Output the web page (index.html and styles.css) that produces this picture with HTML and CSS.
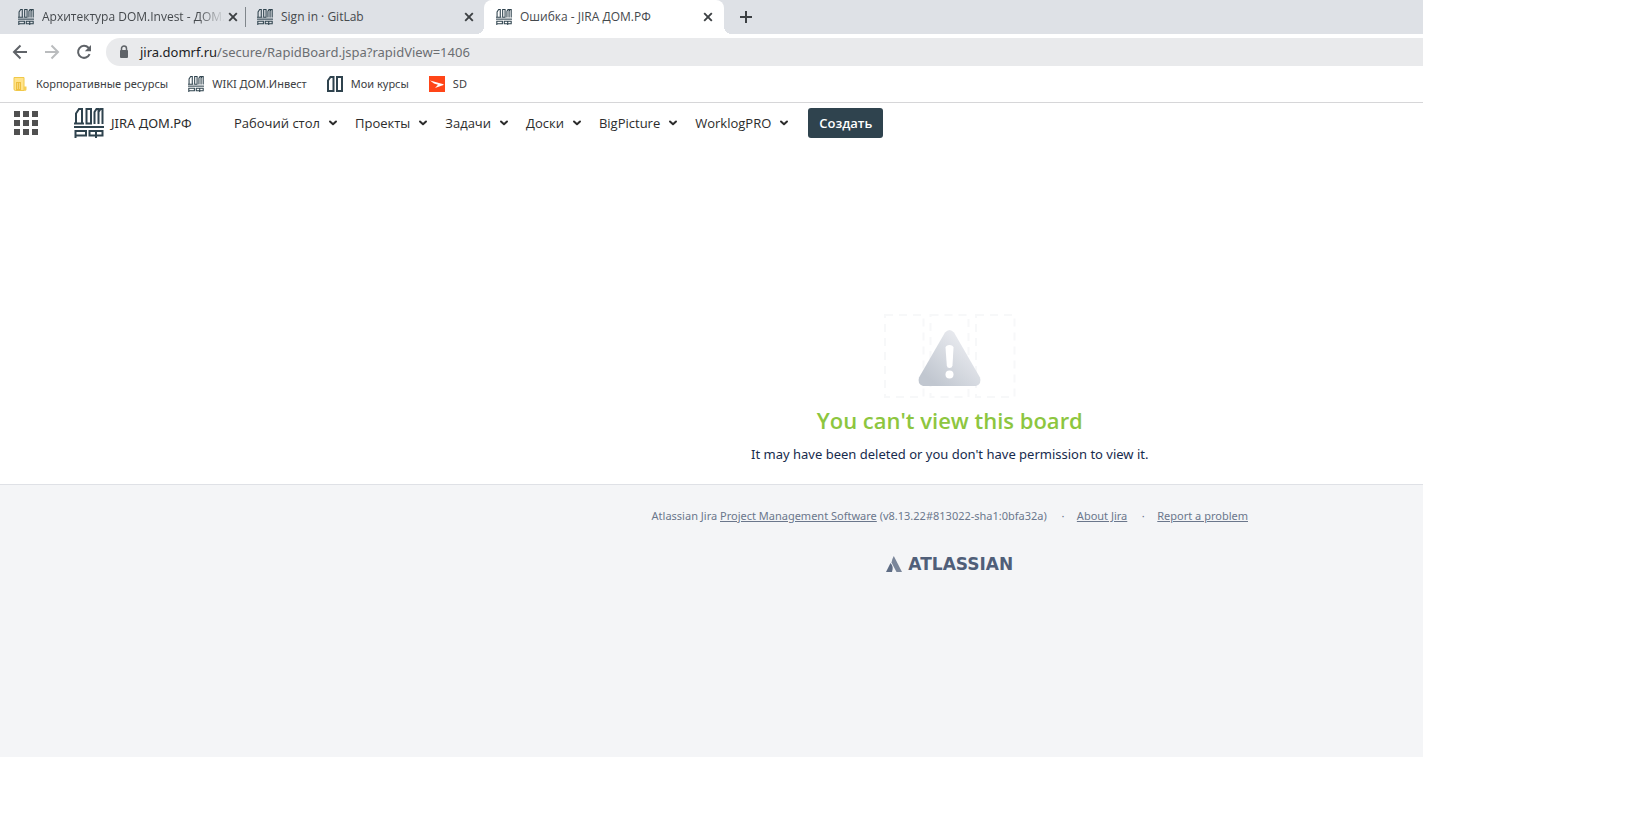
FILE: index.html
```html
<!DOCTYPE html>
<html lang="ru">
<head>
<meta charset="utf-8">
<title>Ошибка - JIRA ДОМ.РФ</title>
<link rel="stylesheet" href="styles.css">
</head>
<body>
<svg class="defs" aria-hidden="true">
  <symbol id="domrf" viewBox="0 0 30 30">
    <g fill="none" stroke="currentColor" stroke-width="2">
      <path d="M2 16V5.500L5 1H8V16M0 15.500H10M12.500 1H17V15.500H12.500ZM20.500 16V4L22.500 1H24.500V16M24.500 4L26.500 1H28.500V16"/>
      <path d="M0 19H30" stroke-width="2"/>
      <path d="M1.500 30V23H12V27.500H1.500M15.500 23H28.500V27.500H15.500ZM22 22V30"/>
    </g>
  </symbol>
  <symbol id="cross" viewBox="0 0 10 10"><path d="M1.200 1.200L8.800 8.800M8.800 1.200L1.200 8.800" stroke="currentColor" stroke-width="1.900"/></symbol>
  <symbol id="chevron" viewBox="0 0 10 8"><path d="M2 2.500L5 5.300L8 2.500" fill="none" stroke="currentColor" stroke-width="2" stroke-linecap="round" stroke-linejoin="round"/></symbol>
</svg>
<div class="screen">
  <div class="tabs">
    <div class="tab">
      <svg class="favicon"><use href="#domrf"/></svg>
      <span class="tab-title tab-fade">Архитектура DOM.Invest - ДОМ.</span>
      <button class="close" aria-label="Закрыть"><svg><use href="#cross"/></svg></button>
    </div>
    <div class="tab tab-split">
      <svg class="favicon"><use href="#domrf"/></svg>
      <span class="tab-title">Sign in · GitLab</span>
      <button class="close" aria-label="Закрыть"><svg><use href="#cross"/></svg></button>
    </div>
    <div class="tab tab-active">
      <svg class="favicon"><use href="#domrf"/></svg>
      <span class="tab-title">Ошибка - JIRA ДОМ.РФ</span>
      <button class="close" aria-label="Закрыть"><svg><use href="#cross"/></svg></button>
    </div>
    <button class="new-tab" aria-label="Новая вкладка"><svg viewBox="0 0 12 12"><path d="M6 0V12M0 6H12" stroke="currentColor" stroke-width="2"/></svg></button>
  </div>
  <div class="toolbar">
    <button class="tool" aria-label="Назад"><svg viewBox="0 0 16 16"><path d="M15 8H2M8.500 1.500L2 8L8.500 14.500" fill="none" stroke="currentColor" stroke-width="2"/></svg></button>
    <button class="tool tool-off" aria-label="Вперёд"><svg viewBox="0 0 16 16"><path d="M1 8H14M7.500 1.500L14 8L7.500 14.500" fill="none" stroke="currentColor" stroke-width="2"/></svg></button>
    <button class="tool" aria-label="Обновить"><svg viewBox="0 0 16 16"><path d="M13.600 10.200A6 6 0 1 1 12.500 3.800L14 5.400" fill="none" stroke="currentColor" stroke-width="2"/><path d="M15 1V7.200H8.800Z" fill="currentColor"/></svg></button>
    <a class="address" href="#">
      <svg class="lock" viewBox="0 0 10 14"><path d="M2.500 6V3.500a2.500 2.500 0 0 1 5 0V6" fill="none" stroke="currentColor" stroke-width="1.500"/><rect x="1" y="5" width="8" height="8" rx="1" fill="currentColor"/></svg>
      <span><span class="host">jira.domrf.ru</span>/secure/RapidBoard.jspa?rapidView=1406</span>
    </a>
  </div>
  <div class="bookmarks">
    <a href="#"><svg viewBox="0 0 16 16"><path d="M2 1.500h10v13H3.500A1.500 1.500 0 0 1 2 13Z" fill="#ffe38a" stroke="#f0c849"/><path d="M12 10.500h2.500v3a1.500 1.500 0 0 1-2.500 1Z" fill="#f7cf55"/><path d="M4 6h5v8H4Z" fill="#eebf3f"/><path d="M5 8h1M7 8h1M5 10h1M7 10h1M5 12h1M7 12h1" stroke="#fff0b8"/></svg><span>Корпоративные ресурсы</span></a>
    <a href="#"><svg><use href="#domrf"/></svg><span>WIKI ДОМ.Инвест</span></a>
    <a href="#"><svg viewBox="0 0 16 16"><path d="M1 15V4.500L3.500 1H6.500V15ZM10 1H15V15H10Z" fill="none" stroke="#2f434e" stroke-width="2"/></svg><span>Мои курсы</span></a>
    <a href="#"><svg viewBox="0 0 16 16"><rect width="16" height="16" fill="#ff4518"/><path d="M1 4.500L14.500 8.200V9L6 12L9 8.700L5 7.500Z" fill="#fff"/></svg><span>SD</span></a>
  </div>
  <header class="header">
    <button class="apps" aria-label="Приложения"><svg viewBox="0 0 24 24"><path d="M0 0h6v6H0zM9 0h6v6H9zM18 0h6v6h-6zM0 9h6v6H0zM9 9h6v6H9zM18 9h6v6h-6zM0 18h6v6H0zM9 18h6v6H9zM18 18h6v6h-6z" fill="#505050"/></svg></button>
    <a class="brand" href="#"><svg><use href="#domrf"/></svg><span>JIRA ДОМ.РФ</span></a>
    <nav class="nav">
      <button>Рабочий стол<svg><use href="#chevron"/></svg></button>
      <button>Проекты<svg><use href="#chevron"/></svg></button>
      <button>Задачи<svg><use href="#chevron"/></svg></button>
      <button>Доски<svg><use href="#chevron"/></svg></button>
      <button>BigPicture<svg><use href="#chevron"/></svg></button>
      <button>WorklogPRO<svg><use href="#chevron"/></svg></button>
    </nav>
    <button class="create">Создать</button>
  </header>
  <main class="message">
    <svg class="art" viewBox="0 0 132 84">
      <defs><linearGradient id="grey" x1="0.200" y1="0.900" x2="0.800" y2="0.300"><stop offset="0" stop-color="#c1c7d0"/><stop offset="1" stop-color="#e6e8ed"/></linearGradient></defs>
      <path d="M1 1H39.500V83H1ZM46.500 1H84.500V83H46.500ZM92 1H130.500V83H92Z" fill="none" stroke="#f7f8f9" stroke-width="2" stroke-dasharray="8 6"/>
      <path d="M61 18.500Q65.500 13.500 70 18.500L96 63.500Q98 70 92 72H39Q33 70 35 63.500Z" fill="url(#grey)"/>
      <path d="M61.500 33.500Q62 31 65.500 31T69.500 33.500L68.500 51.500Q68 54 65.500 54T62.800 51.500Z" fill="#fff"/><circle cx="65.500" cy="60.500" r="4" fill="#fff"/>
    </svg>
    <h1>You can't view this board</h1>
    <p>It may have been deleted or you don't have permission to view it.</p>
  </main>
  <footer class="footer">
    <ul>
      <li>Atlassian Jira <a href="#">Project Management Software</a> (v8.13.22#813022-sha1:0bfa32a)</li>
      <li><span class="dot">·</span><a href="#">About Jira</a></li>
      <li><span class="dot">·</span><a href="#">Report a problem</a></li>
    </ul>
    <a class="atlassian" href="#"><svg viewBox="0 0 16 16"><path d="M7.800 0L16 16H10.500L5.500 6.500Q6 3 7.800 0Z" fill="#7a869a"/><path d="M4.500 7Q8 10.500 6 16H0Z" fill="#5e6c84"/></svg><span>ATLASSIAN</span></a>
  </footer>
</div>
</body>
</html>
```
FILE: styles.css
```css
* { box-sizing: border-box; }
body {
  margin: 0;
  padding: 0 229px 60px 0;
  background: #fff;
  color: #172b4d;
  font: 13px/20px "Noto Sans", sans-serif;
}
a { color: inherit; text-decoration: none; }
button { border: 0; padding: 0; background: none; color: inherit; font: inherit; }
svg { display: block; flex: none; }
.defs { position: absolute; width: 0; height: 0; }
.screen { display: flex; flex-direction: column; min-height: calc(100vh - 60px); }

.tabs { display: flex; height: 34px; padding-left: 6px; background: #dee1e6; color: #45494d; font-family: "Open Sans", "Noto Sans", sans-serif; font-size: 12px; }
.tab { display: flex; align-items: center; width: 239px; padding: 0 7px 0 12px; }
.tab-split { background: linear-gradient(#80868b, #80868b) left center / 1px 20px no-repeat; }
.tab-active { width: 240px; padding-right: 8px; background: #fff; border-radius: 8px 8px 0 0; position: relative; }
.tab-active::before, .tab-active::after { content: ""; position: absolute; bottom: 0; width: 8px; height: 8px; }
.tab-active::before { left: -8px; background: radial-gradient(circle at 0 0, transparent 8px, #fff 8px); }
.tab-active::after { right: -8px; background: radial-gradient(circle at 100% 0, transparent 8px, #fff 8px); }
.favicon { width: 16px; height: 16px; margin-right: 8px; color: #2f434e; }
.tab-title { flex: 1; white-space: nowrap; }
.tab-fade { mask-image: linear-gradient(to right, #000 85%, transparent); }
.close { width: 16px; height: 16px; padding: 3px; color: #3c4043; }
.close svg { width: 10px; height: 10px; }
.new-tab { width: 28px; margin-left: 8px; padding: 0 8px; color: #3c4043; }
.new-tab svg { width: 12px; height: 12px; }

.toolbar { display: flex; align-items: center; gap: 16px; height: 36px; padding-left: 12px; color: #5f6368; }
.tool svg { width: 16px; height: 16px; }
.tool-off { color: #babcbe; }
.address { display: flex; align-items: center; gap: 11px; flex: 1; height: 28px; margin-left: -2px; padding-left: 13px; border-radius: 14px 0 0 14px; background: #e9eaec; color: #6b6e72; }
.lock { width: 10px; height: 14px; color: #5f6368; }
.host { color: #202124; }

.bookmarks { display: flex; gap: 20px; height: 33px; padding: 4px 12px 9px; border-bottom: 1px solid #d6d6d8; color: #3c4043; font-size: 11px; }
.bookmarks a { display: flex; align-items: center; gap: 8px; white-space: nowrap; }
.bookmarks svg { width: 16px; height: 16px; color: #2f434e; }

.header { display: flex; align-items: center; height: 40px; padding-left: 14px; color: #2c2c2c; white-space: nowrap; }
.apps svg { width: 24px; height: 24px; }
.brand { display: flex; align-items: center; gap: 7px; width: 124px; margin-left: 36px; }
.brand svg { width: 30px; height: 30px; color: #2f434e; }
.nav { display: flex; gap: 17px; margin: 0 19px 0 36px; font-family: "Open Sans", "Noto Sans", sans-serif; }
.nav button { display: flex; align-items: center; gap: 8px; }
.nav svg { width: 10px; height: 8px; }
.create { height: 30px; padding: 0 11px; border-radius: 3px; background: #2f434e; color: #fff; font-family: "Open Sans", "Noto Sans", sans-serif; font-weight: 600; }

.message { display: flex; flex-direction: column; align-items: center; height: 341px; padding: 171px 0 0 calc(33% + 7px); text-align: center; }
.art { width: 132px; height: 84px; }
h1 { margin: 8px 0 0; color: #8dc63f; font-family: "Open Sans", "Noto Sans", sans-serif; font-size: 22px; line-height: 28px; font-weight: 600; }
p { margin: 10px 0 0; }

.footer { display: flex; flex: 1; flex-direction: column; align-items: center; gap: 30px; padding: 21px 0 0 calc(33% + 7px); border-top: 1px solid #dfe1e6; background: #f4f5f7; color: #6b778c; font-size: 11px; }
.footer ul { display: flex; margin: 0; padding: 0; list-style: none; white-space: nowrap; }
.footer li a { text-decoration: underline; }
.dot { display: inline-block; width: 30px; padding-left: 2px; text-align: center; }
.atlassian { display: flex; align-items: center; gap: 6px; color: #505f79; font: 700 17px/16px "DejaVu Sans", sans-serif; }
.atlassian svg { width: 16px; height: 16px; }
```
